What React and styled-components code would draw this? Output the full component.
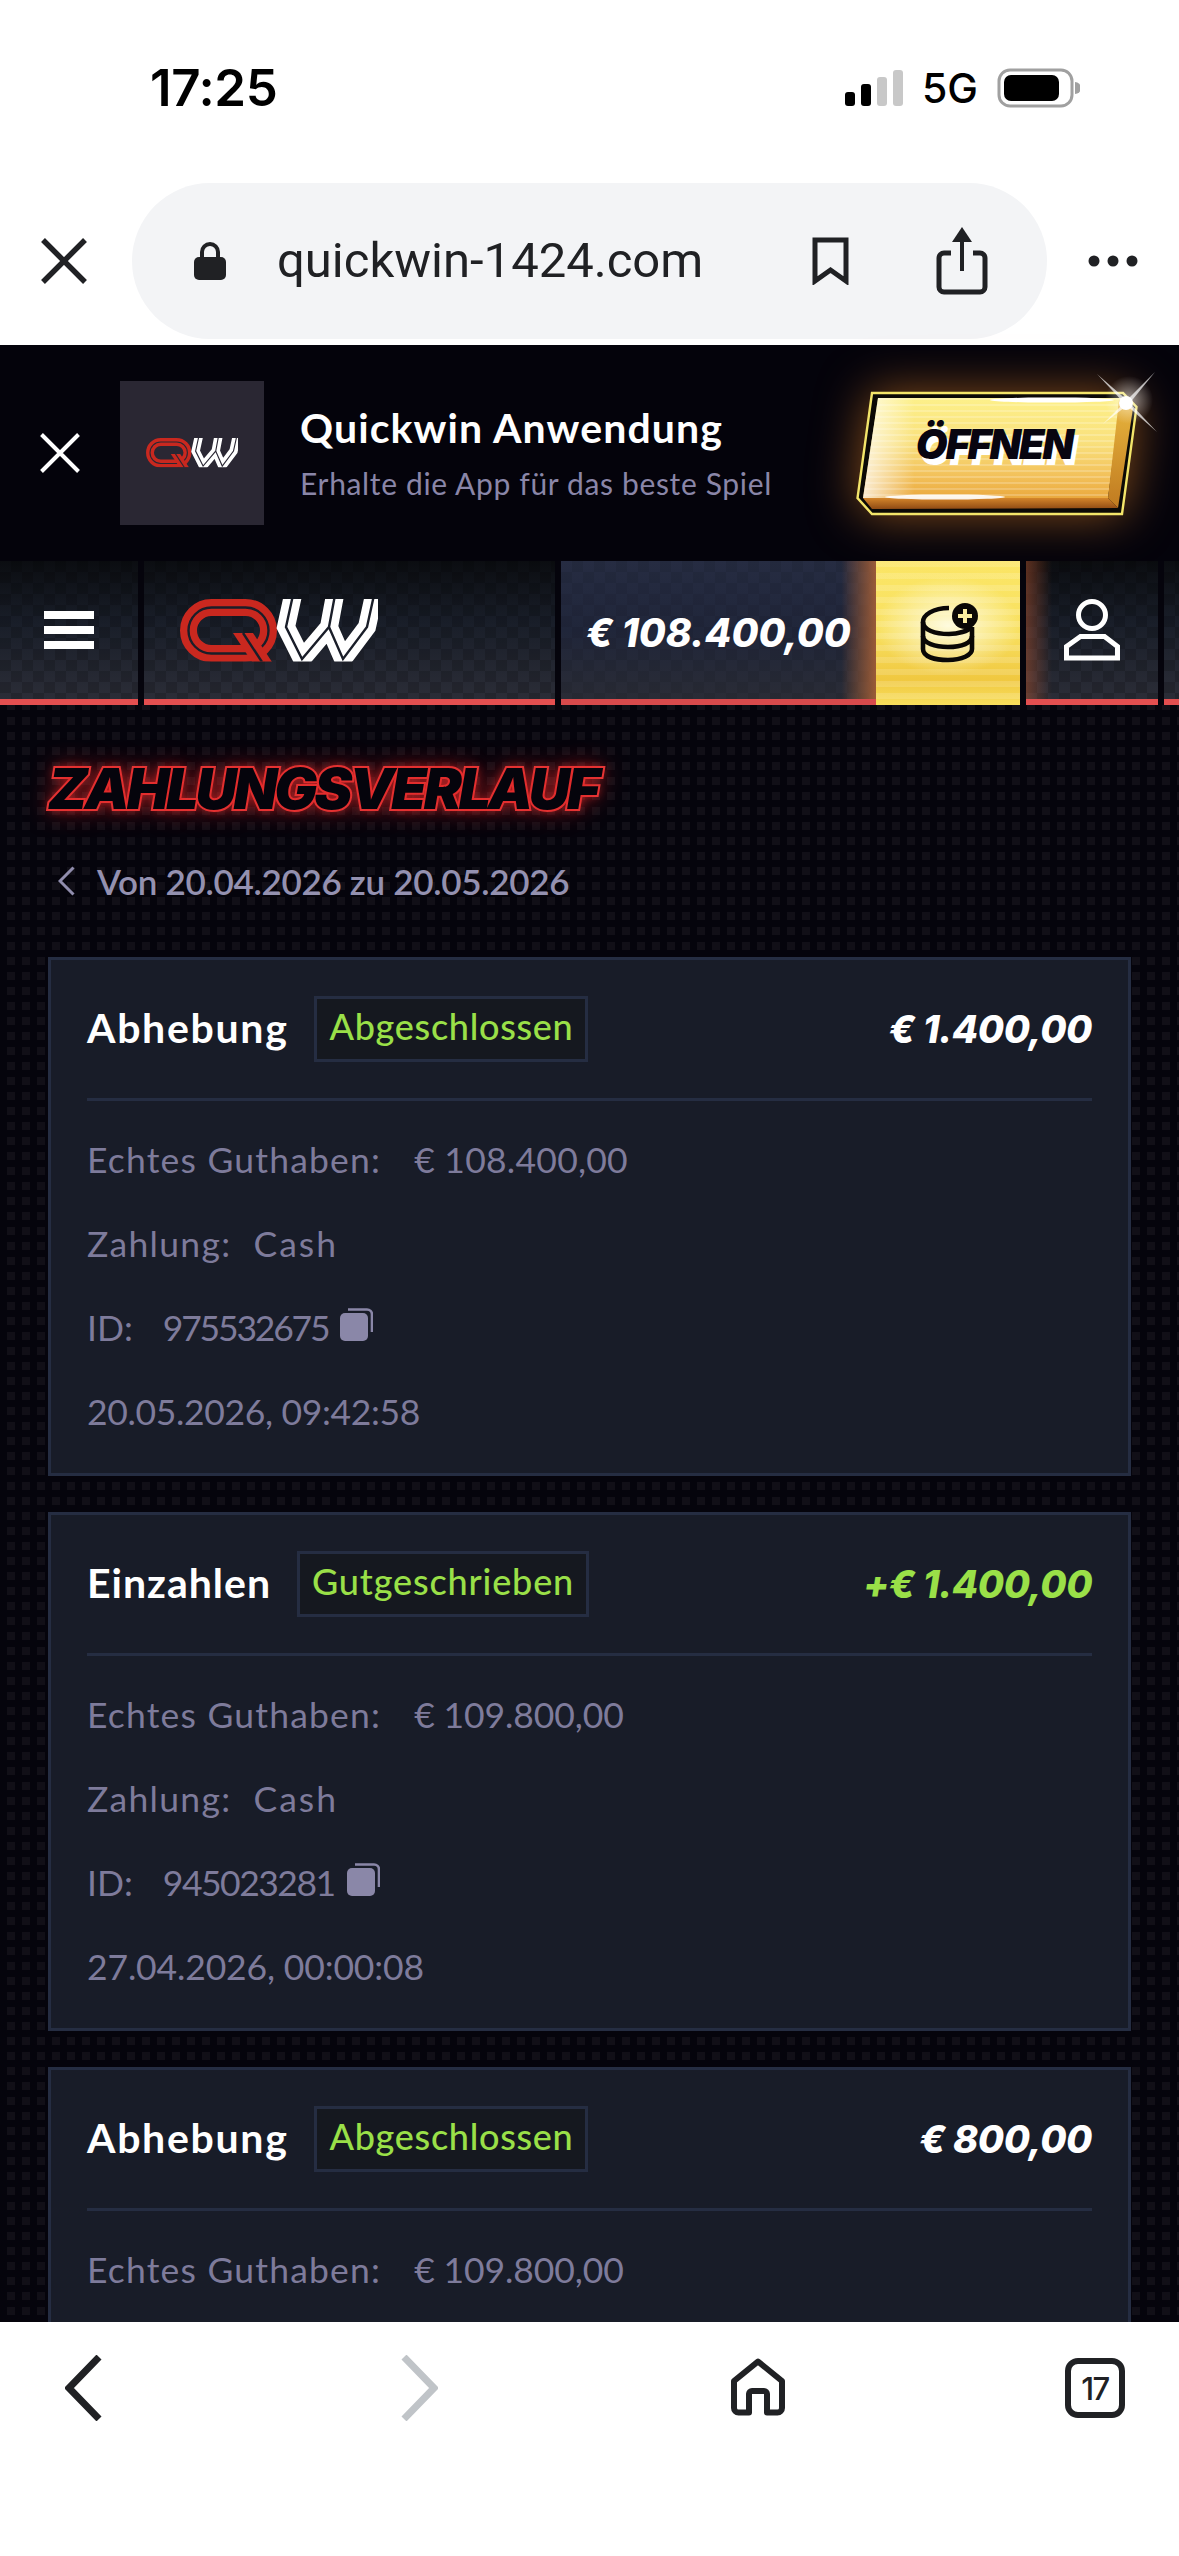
import React from 'react';
import styled, { createGlobalStyle, css } from 'styled-components';

const Global = createGlobalStyle`
  html, body { margin: 0; padding: 0; background: #fff; }
  * { box-sizing: border-box; }
`;

const Page = styled.div`
  width: 1179px; height: 2556px; display: flex; flex-direction: column; overflow: hidden;
  background: #fff; font-family: Lato, "Liberation Sans", sans-serif;
`;
const StatusBar = styled.div`
  height: 168px; flex: none; display: flex; align-items: flex-start; justify-content: space-between;
  padding: 62px 99px 0 150px; font-family: Inter, sans-serif; color: #000;
`;
const Time = styled.div`font-size: 51px; line-height: 52px; font-weight: 600; letter-spacing: -0.4px;`;
const StatusRight = styled.div`display: flex; align-items: center; gap: 19px; height: 52px;`;
const Net = styled.div`font-size: 41px; font-weight: 500; line-height: 52px;`;
const Signal = styled.div`display: flex; align-items: flex-end; gap: 6px; height: 36px; margin-left: -4px;`;
const SignalBar = styled.span`
  width: 10px; height: ${p => p.$h}px; border-radius: 3px; background: ${p => (p.$on ? '#000' : '#c8c8c8')};
`;
const ChromeBar = styled.div`
  height: 177px; flex: none; display: flex; align-items: flex-start; padding-top: 15px;
`;
const ChromeSide = styled.div`
  width: ${p => p.$w}px; height: 156px; flex: none; display: flex; align-items: center; justify-content: center;
`;
const AddressBar = styled.div`
  width: 915px; height: 156px; margin-left: 4px; flex: none; border-radius: 78px; background: #f3f4f6; display: flex; align-items: center; padding-left: 62px; color: #202124;
`;
const Url = styled.div`
  font-family: Roboto, sans-serif; font-size: 49px; line-height: 56px; margin-left: 51px; width: 535px; letter-spacing: 0;
`;
const AddressIcon = styled.svg`flex: none; margin-right: ${p => p.$mr || 0}px; display: block;`;

const Banner = styled.div`
  height: 216px; flex: none; background: #04030b; display: flex; align-items: center; padding: 0 42px 0 40px;
`;
const BannerClose = styled.svg`flex: none; display: block;`;
const AppIcon = styled.div`
  width: 144px; height: 144px; margin-left: 40px; flex: none; background: #2a2733; display: flex; align-items: center; justify-content: center;
`;
const BannerText = styled.div`margin-left: 36px; display: flex; flex-direction: column; gap: 11px;`;
const BannerTitle = styled.div`color: #fff; font-size: 41px; line-height: 48px; font-weight: 700; letter-spacing: 1.1px; white-space: nowrap;`;
const BannerSub = styled.div`color: #8a86a8; font-size: 30px; line-height: 40px; letter-spacing: 0.65px; white-space: nowrap;`;
const OpenButton = styled.div`position: relative; width: 280px; height: 123px; margin-left: auto; flex: none;`;
const OpenPlate = styled.svg`position: absolute; inset: 0; overflow: visible; display: block;`;
const PlateGlow = styled.g`filter: drop-shadow(0 0 24px rgba(235,135,40,.55));`;
const OpenLabel = styled.span`
  position: absolute; left: 58px; top: 26px; width: 158px; text-align: center; font-family: Inter, sans-serif;
  font-size: 41px; line-height: 52px; font-weight: 900; font-style: italic; color: #080510; letter-spacing: -2px;
  text-shadow: 4px 6px 0 #fff;
`;

const carbon = css`
  background-image:
    conic-gradient(rgba(0,0,0,.16) 25%, transparent 0 50%, rgba(0,0,0,.16) 0 75%, transparent 0),
    linear-gradient(180deg, #0b0d11 0%, #191e29 45%, #2b2d37 100%);
  background-size: 22px 22px, 100% 100%;
`;
const Header = styled.div`
  height: 144px; flex: none; background: #05040c; display: grid; grid-template-columns: 138px 411px 459px 132px 1fr; column-gap: 6px;
`;
const Cell = styled.div`
  ${carbon}
  border-bottom: 6px solid #e34f50; display: flex; align-items: center;
  justify-content: ${p => (p.$left ? 'flex-start' : 'center')};
  padding-left: ${p => (p.$left ? 36 : 0)}px;
`;
const ProfileCell = styled(Cell)`
  background-image:
    linear-gradient(90deg, rgba(190,90,50,.45), transparent 26px),
    conic-gradient(rgba(0,0,0,.16) 25%, transparent 0 50%, rgba(0,0,0,.16) 0 75%, transparent 0),
    linear-gradient(180deg, #0b0d11 0%, #191e29 45%, #2b2d37 100%);
  background-size: 100% 100%, 22px 22px, 100% 100%;
`;
const MenuIcon = styled.div`display: flex; flex-direction: column; gap: 7px; width: 50px;`;
const MenuLine = styled.span`height: 8px; background: #fff; display: block;`;
const WalletGroup = styled.div`display: flex;`;
const BalanceCell = styled.div`
  width: 315px; border-bottom: 6px solid #d84a4c; padding: 4px 0 0 25px; display: flex; align-items: center;
  background-image:
    linear-gradient(90deg, transparent 89%, rgba(175,100,55,.85) 100%),
    conic-gradient(rgba(0,0,0,.07) 25%, transparent 0 50%, rgba(0,0,0,.07) 0 75%, transparent 0),
    linear-gradient(180deg, #262c42 0%, #20263a 50%, #2a2c36 100%);
  background-size: 100% 100%, 22px 22px, 100% 100%;
`;
const BalanceText = styled.div`
  color: #fff; font-family: Inter, sans-serif; font-size: 39px; font-weight: 800; font-style: italic; letter-spacing: 0; white-space: nowrap;
`;
const GoldCell = styled.div`
  width: 144px; display: flex; align-items: center; justify-content: center;
  background-image:
    radial-gradient(ellipse 50% 34% at 50% 45%, rgba(255,255,240,.85), transparent 100%),
    repeating-linear-gradient(180deg, rgba(255,255,255,.14) 0 6px, transparent 6px 12px),
    linear-gradient(180deg, #fbe666 0%, #f8e060 50%, #f0c840 82%, #f8de5c 100%);
`;

const Main = styled.div`
  flex: 1; min-height: 0; overflow: hidden; padding: 60px 48px 0;
  background-color: #110f17;
  background-image:
    repeating-linear-gradient(90deg, #05040c 0 7px, transparent 7px 15px),
    repeating-linear-gradient(0deg, #05040c 0 7px, transparent 7px 15px);
`;
const Heading = styled.h1`
  margin: 0; font-family: Inter, sans-serif; font-size: 57px; line-height: 48px; font-weight: 900; font-style: italic;
  letter-spacing: -3.1px; color: #05040c; white-space: nowrap;
  -webkit-text-stroke: 4px #e83c3c; paint-order: stroke fill;
  text-shadow: 0 0 10px rgba(225,40,40,.8), 0 0 26px rgba(225,40,40,.7);
`;
const DateRange = styled.div`
  margin-top: 48px; display: flex; align-items: center; gap: 22px; padding-left: 10px; height: 40px;
  color: #9491b0; font-size: 35px; font-weight: 600; letter-spacing: -0.3px;
`;
const DateChevron = styled.svg`flex: none; display: block;`;
const Cards = styled.div`margin-top: 56px; display: flex; flex-direction: column; gap: 36px;`;
const Card = styled.section`
  width: 1083px; min-height: 519px; flex: none; background: #181c28; border: 3px solid #252d42;
  padding: 36px 36px 18px;
`;
const CardHead = styled.div`
  display: flex; align-items: center; padding-bottom: 36px; border-bottom: 3px solid #252d42;
`;
const CardTitle = styled.div`
  color: #fff; font-size: 41px; font-weight: 700; line-height: 48px; padding-bottom: 2px; letter-spacing: ${p => p.$ls}px; white-space: nowrap;
`;
const Badge = styled.div`
  margin-left: 26px; height: 66px; padding: 0 12px 6px; background: #15181f; border: 3px solid #252d42; display: flex; align-items: center;
  color: #9ae048; font-size: 36px; font-weight: 500; letter-spacing: ${p => p.$ls}px; white-space: nowrap;
`;
const Amount = styled.div`
  margin-left: auto; color: ${p => (p.$green ? '#9ae048' : '#fff')}; font-family: Inter, sans-serif; font-size: 38px; font-weight: 800; font-style: italic; letter-spacing: -0.4px; white-space: nowrap;
`;
const Rows = styled.div`padding-top: 18px;`;
const Row = styled.div`
  height: 84px; padding-bottom: 3px; display: flex; align-items: center; color: #7e7b9b; font-size: 35.5px; white-space: nowrap;
`;
const Label = styled.span`letter-spacing: ${p => p.$ls}px;`;
const Value = styled.span`margin-left: ${p => p.$ml || 0}px; letter-spacing: ${p => p.$ls}px;`;
const CopyWrap = styled.svg`margin-left: 12px; margin-top: -6px; display: block; flex: none;`;
const BottomBar = styled.div`
  height: 234px; flex: none; background: #fff; display: flex; align-items: flex-start; padding: 33px 0 0 65px;
`;
const BottomIcon = styled.svg`display: block; flex: none; margin-top: ${p => p.$mt || 0}px; margin-left: ${p => p.$ml || 0}px;`;
const TabCount = styled.div`
  width: 60px; height: 60px; margin: 3px 0 0 280px; border: 6px solid #202124; border-radius: 13px; display: flex; align-items: center; justify-content: center;
  font-family: Inter, sans-serif; font-size: 31px; font-weight: 500; color: #202124; letter-spacing: -1.5px;
`;
const Glyph = styled.svg`display: block; flex: none;`;

const wPath = 'M113 -4 L106 28 L122 60 L149 28 L163 60 L187 28 L194 -4 M149 28 L155 -4';
const Logo = ({ scale = 1, gap }) => (
  <Glyph width={198 * scale} height={63 * scale} viewBox="0 0 198 63">
    <defs>
      <clipPath id={`lc${scale}`}><rect x="0" y="0" width="198" height="62.5" /></clipPath>
    </defs>
    <g clipPath={`url(#lc${scale})`}>
      <rect x="8.5" y="8.5" width="80" height="46" rx="23" fill="none" stroke="#c9281f" strokeWidth="17" />
      <rect x="8.5" y="8.5" width="80" height="46" rx="23" fill="none" stroke={gap} strokeWidth="2.4" />
      <polygon points="53,34 73,34 92,63 72,63" fill="#c9281f" />
      <path d="M63 34 L82 63" stroke={gap} strokeWidth="2.4" />
      <path d={wPath} fill="none" stroke="#fff" strokeWidth="18" strokeLinejoin="miter" />
      <path d={wPath} fill="none" stroke={gap} strokeWidth="2.4" />
    </g>
  </Glyph>
);

const Copy = () => (
  <CopyWrap width="33" height="33" viewBox="0 0 33 33">
    <path d="M8 1.5 H27 a5 5 0 0 1 5 5 V24" fill="none" stroke="#8a87a8" strokeWidth="2.6" />
    <rect x="0" y="5" width="28" height="28" rx="5" fill="#8a87a8" />
  </CopyWrap>
);

const Transaction = ({ title, titleLs, status, statusLs, amount, green, balance, balanceLs, id, idLs, date, dateLs }) => (
  <Card>
    <CardHead>
      <CardTitle $ls={titleLs}>{title}</CardTitle>
      <Badge $ls={statusLs}>{status}</Badge>
      <Amount $green={green}>{amount}</Amount>
    </CardHead>
    <Rows>
      <Row><Label $ls={1.2}>Echtes Guthaben:</Label><Value $ml={33} $ls={balanceLs}>{balance}</Value></Row>
      {id && <Row><Label $ls={1.3}>Zahlung:</Label><Value $ml={22} $ls={2}>Cash</Value></Row>}
      {id && <Row><Label $ls={0}>ID:</Label><Value $ml={30} $ls={idLs}>{id}</Value><Copy /></Row>}
      {id && <Row><Value $ls={dateLs}>{date}</Value></Row>}
    </Rows>
  </Card>
);

export default function App() {
  return (
    <Page>
      <Global />
      <StatusBar>
        <Time>17:25</Time>
        <StatusRight>
          <Signal>
            <SignalBar $on $h={14} /><SignalBar $on $h={22} /><SignalBar $h={29} /><SignalBar $h={36} />
          </Signal>
          <Net>5G</Net>
          <Glyph width="83" height="40" viewBox="0 0 83 40">
            <rect x="2" y="2" width="73" height="36" rx="11" fill="none" stroke="#a0a0a0" strokeWidth="3" />
            <rect x="7" y="7" width="55" height="26" rx="7" fill="#000" />
            <path d="M78 14 a6 6 0 0 1 0 12 Z" fill="#a0a0a0" />
          </Glyph>
        </StatusRight>
      </StatusBar>

      <ChromeBar>
        <ChromeSide $w={128}>
          <Glyph width="48" height="48" viewBox="0 0 48 48"><path d="M3 3 L45 45 M45 3 L3 45" stroke="#202124" strokeWidth="5.5" /></Glyph>
        </ChromeSide>
        <AddressBar>
          <AddressIcon width="32" height="38" viewBox="0 0 32 38">
            <path d="M8 18 V10 a8 8 0 0 1 16 0 V18" fill="none" stroke="#202124" strokeWidth="4" />
            <rect x="0" y="15" width="32" height="23" rx="5" fill="#202124" />
          </AddressIcon>
          <Url>quickwin-1424.com</Url>
          <AddressIcon $mr={86} width="37" height="48" viewBox="0 0 37 48">
            <path d="M3 3 H34 V44 L18.5 33 L3 44 Z" fill="none" stroke="#202124" strokeWidth="5" />
          </AddressIcon>
          <AddressIcon width="54" height="68" viewBox="0 0 54 68">
            <path d="M16 26 H9 a5 5 0 0 0 -5 5 V60 a5 5 0 0 0 5 5 H45 a5 5 0 0 0 5 -5 V31 a5 5 0 0 0 -5 -5 H38" fill="none" stroke="#202124" strokeWidth="5" />
            <path d="M27 6 V44" stroke="#202124" strokeWidth="4" />
            <path d="M27 0 L37 15 H17 Z" fill="#202124" />
          </AddressIcon>
        </AddressBar>
        <ChromeSide $w={132}>
          <Glyph width="50" height="12" viewBox="0 0 50 12">
            <circle cx="6" cy="6" r="5.5" fill="#202124" /><circle cx="25" cy="6" r="5.5" fill="#202124" /><circle cx="44" cy="6" r="5.5" fill="#202124" />
          </Glyph>
        </ChromeSide>
      </ChromeBar>

      <Banner>
        <BannerClose width="40" height="40" viewBox="0 0 40 40"><path d="M1.5 1.5 L38.5 38.5 M38.5 1.5 L1.5 38.5" stroke="#fff" strokeWidth="4" /></BannerClose>
        <AppIcon><Logo scale={0.468} gap="#2a2733" /></AppIcon>
        <BannerText>
          <BannerTitle>Quickwin Anwendung</BannerTitle>
          <BannerSub>Erhalte die App für das beste Spiel</BannerSub>
        </BannerText>
        <OpenButton>
          <OpenPlate width="280" height="123" viewBox="0 0 280 123">
            <defs>
              <linearGradient id="face" x1="0" y1="0" x2="0" y2="1">
                <stop offset="0" stopColor="#fdf08a" />
                <stop offset=".45" stopColor="#f9e07c" />
                <stop offset=".8" stopColor="#f2bf58" />
                <stop offset="1" stopColor="#eaa93e" />
              </linearGradient>
              <linearGradient id="side" x1="0" y1="0" x2="0" y2="1">
                <stop offset="0" stopColor="#e8b63e" />
                <stop offset="1" stopColor="#c07a20" />
              </linearGradient>
              <linearGradient id="under" x1="0" y1="0" x2="0" y2="1">
                <stop offset="0" stopColor="#d4852a" />
                <stop offset="1" stopColor="#8f4a14" />
              </linearGradient>
              <linearGradient id="sheen" x1="0" y1="0" x2="1" y2="0">
                <stop offset="0" stopColor="#fff" stopOpacity=".75" />
                <stop offset=".2" stopColor="#fff" stopOpacity="0" />
              </linearGradient>
              <pattern id="lines" width="6" height="6" patternUnits="userSpaceOnUse">
                <rect width="6" height="2" fill="#fff" fillOpacity=".2" />
              </pattern>
              <radialGradient id="spk"><stop offset="0" stopColor="#fff" stopOpacity=".55" /><stop offset="1" stopColor="#fff" stopOpacity="0" /></radialGradient>
            </defs>
            <PlateGlow>
              <polygon points="15,1 266,1 279.5,15 265,122 15,122 0.5,106" fill="#0b0906" stroke="#f3e56a" strokeWidth="2.4" />
            </PlateGlow>
            <polygon points="21,6 264,6 251,106 6,106" fill="url(#face)" />
            <polygon points="21,6 264,6 251,106 6,106" fill="url(#lines)" />
            <polygon points="21,6 264,6 251,106 6,106" fill="url(#sheen)" />
            <polygon points="262,8 276,16 261,116 251,106" fill="url(#side)" />
            <polygon points="6,106 251,106 261,116 15,117" fill="url(#under)" />
            <ellipse cx="195" cy="8" rx="62" ry="2.6" fill="#fff" />
            <ellipse cx="88" cy="105" rx="60" ry="2.6" fill="#fff" fillOpacity=".9" />
            <circle cx="272" cy="8" r="24" fill="url(#spk)" />
            <polygon points="240,-18 271,9 300,40 268,12" fill="#fff" fillOpacity=".7" />
            <polygon points="298,-20 272,12 246,32 269,9" fill="#fff" fillOpacity=".7" />
            <circle cx="269" cy="11" r="7" fill="#fff" />
          </OpenPlate>
          <OpenLabel>ÖFFNEN</OpenLabel>
        </OpenButton>
      </Banner>

      <Header>
        <Cell>
          <MenuIcon><MenuLine /><MenuLine /><MenuLine /></MenuIcon>
        </Cell>
        <Cell $left><Logo gap="#1a1e29" /></Cell>
        <WalletGroup>
          <BalanceCell><BalanceText>€ 108.400,00</BalanceText></BalanceCell>
          <GoldCell>
            <Glyph width="60" height="60" viewBox="0 0 60 60">
              <g fill="none" stroke="#0a0806" strokeWidth="4.6">
                <path d="M31 5 C15 5 5 12 5 19 C5 27 17 31 31 31 C40 31 50 28 54 24" />
                <path d="M5 19 V46 C5 54 17 57 30 57 C44 57 54 52 54 46 V24" />
                <path d="M5 33 C5 40 17 44 30 44 C44 44 54 40 54 33" />
              </g>
              <circle cx="47" cy="13" r="13" fill="#0a0806" />
              <path d="M47 6 V20 M40 13 H54" stroke="#fbeea0" strokeWidth="4" />
            </Glyph>
          </GoldCell>
        </WalletGroup>
        <ProfileCell>
          <Glyph width="56" height="62" viewBox="0 0 56 62">
            <circle cx="28" cy="16" r="13.5" fill="none" stroke="#fff" strokeWidth="5" />
            <polygon points="2.5,59 2.5,47.5 16.5,37.5 40.5,37.5 53.5,47.5 53.5,59" fill="none" stroke="#fff" strokeWidth="5" />
          </Glyph>
        </ProfileCell>
        <Cell />
      </Header>

      <Main>
        <Heading>ZAHLUNGSVERLAUF</Heading>
        <DateRange>
          <DateChevron width="17" height="30" viewBox="0 0 17 30"><path d="M15.5 1.5 L2 15 L15.5 28.5" fill="none" stroke="#908dad" strokeWidth="3" /></DateChevron>
          <span>Von 20.04.2026 zu 20.05.2026</span>
        </DateRange>
        <Cards>
          <Transaction title="Abhebung" titleLs={1.7} status="Abgeschlossen" statusLs={0.7} amount="€ 1.400,00" balance="€ 108.400,00" balanceLs={0.25} id="975532675" idLs={-2.2} date="20.05.2026, 09:42:58" dateLs={-0.35} />
          <Transaction title="Einzahlen" titleLs={1} status="Gutgeschrieben" statusLs={0.85} amount="+€ 1.400,00" green balance="€ 109.800,00" balanceLs={-0.1} id="945023281" idLs={-1.5} date="27.04.2026, 00:00:08" dateLs={-0.15} />
          <Transaction title="Abhebung" titleLs={1.7} status="Abgeschlossen" statusLs={0.7} amount="€ 800,00" balance="€ 109.800,00" balanceLs={-0.1} />
        </Cards>
      </Main>

      <BottomBar>
        <BottomIcon width="37" height="66" viewBox="0 0 37 66"><path d="M34 2 L4 33 L34 64" fill="none" stroke="#202124" strokeWidth="7" /></BottomIcon>
        <BottomIcon $ml={299} width="37" height="66" viewBox="0 0 37 66"><path d="M3 2 L33 33 L3 64" fill="none" stroke="#c0c4c8" strokeWidth="7" /></BottomIcon>
        <BottomIcon $mt={3} $ml={293} width="54" height="58" viewBox="0 0 54 58">
          <path d="M3 23 L27 3.5 L51 23 V50 a4.5 4.5 0 0 1 -4.5 4.5 H36 V36 a3 3 0 0 0 -3 -3 H21 a3 3 0 0 0 -3 3 V54.5 H7.5 a4.5 4.5 0 0 1 -4.5 -4.5 Z" fill="none" stroke="#202124" strokeWidth="6" strokeLinejoin="round" />
        </BottomIcon>
        <TabCount>17</TabCount>
      </BottomBar>
    </Page>
  );
}
